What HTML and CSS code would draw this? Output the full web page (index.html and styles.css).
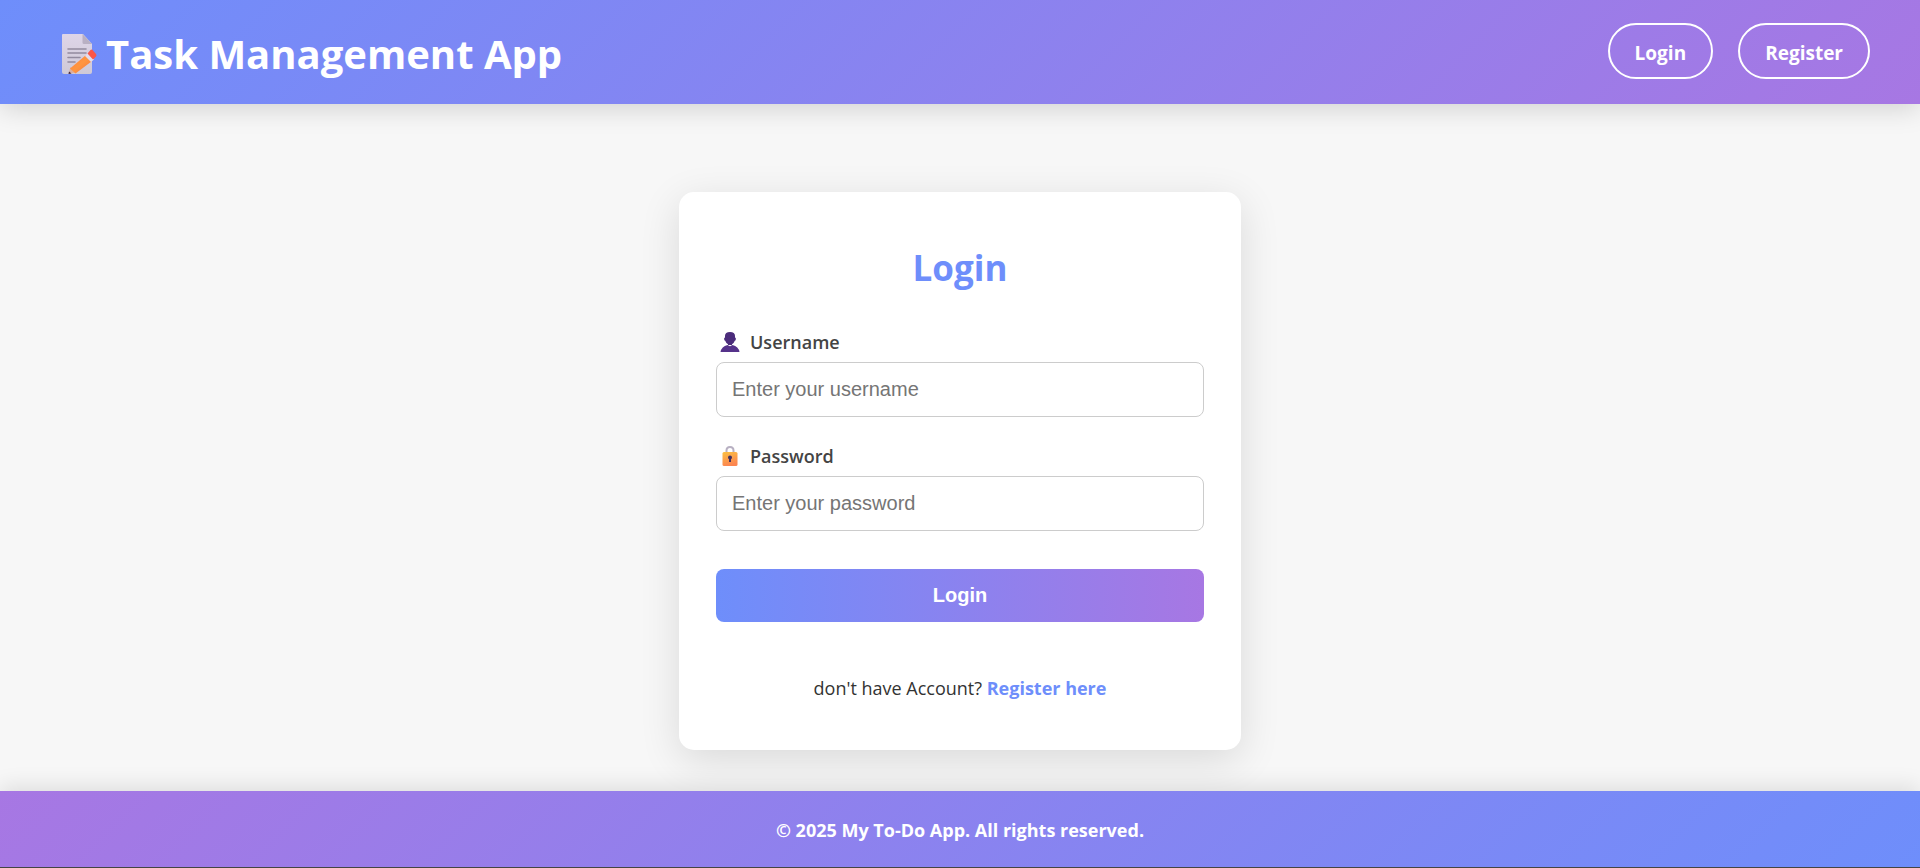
FILE: index.html
```html
<!DOCTYPE html>
<html lang="en">
<head>
<meta charset="utf-8">
<meta name="viewport" content="width=device-width, initial-scale=1">
<title>Task Management App</title>
<link rel="stylesheet" href="styles.css">
</head>
<body>
<header class="site-header">
  <h1 class="brand">
    <svg class="brand-icon" viewBox="0 0 44 44" aria-hidden="true">
      <defs>
        <linearGradient id="paper" x1="0" y1="0" x2="0" y2="1"><stop offset="0" stop-color="#ded5e8"/><stop offset="1" stop-color="#cfc9d6"/></linearGradient>
        <linearGradient id="pencil" x1="0" y1="0" x2="1" y2="1"><stop offset="0" stop-color="#ff7f3d"/><stop offset=".5" stop-color="#ff9640"/><stop offset="1" stop-color="#f4703c"/></linearGradient>
      </defs>
      <path d="M3 2H23L32 12V40Q32 42 30 42H4Q2 42 2 40V3Q2 2 3 2Z" fill="url(#paper)"/>
      <path d="M22.500 2L32 12H24Q22.500 12 22.500 10.500Z" fill="#b9b0c3"/>
      <path d="M8 17H26M8 21H26M8 25.500H20M8 30H15" stroke="#938b9f" stroke-width="1.600" stroke-linecap="round"/>
      <path d="M8.500 42L10.500 35L15.500 40.500Z" fill="#dcae9d"/>
      <path d="M10 36.500L25.500 23.500L31.500 29.500L15.500 41.500Z" fill="url(#pencil)"/>
      <path d="M25 24L28 21L34 27.500L31 30Z" fill="#e3dcec"/>
      <path d="M27.500 21.500L30.500 18Q31.500 17 32.500 18L36 22Q37 23 36 24.500L33 27.500Z" fill="#fb5548"/>
      <path d="M8.500 42L9 39.500L11.500 41.500Z" fill="#3c2440"/>
    </svg>
    <span>Task Management App</span>
  </h1>
  <nav class="nav">
    <a class="nav-link" href="#login">Login</a>
    <a class="nav-link" href="#register">Register</a>
  </nav>
</header>
<main class="content">
  <form class="card" id="login">
    <h2 class="card-title">Login</h2>
    <div class="field">
      <label class="label" for="username">
        <svg class="label-icon" viewBox="0 0 20 20" aria-hidden="true">
          <path d="M5 4Q5 0 10 0T15 4V5.500Q16.200 5.500 15.800 7.500Q15.500 8.800 14.800 8.800Q14 11.200 12 12.200V13H8V12.200Q6 11.200 5.200 8.800Q4.500 8.800 4.200 7.500Q3.800 5.500 5 5.500Z" fill="#4b2c7b"/>
          <path d="M.500 20Q1.500 14.500 7.500 13L10 14.200L12.500 13Q18.500 14.500 19.500 20Z" fill="#55328a"/>
        </svg>
        Username
      </label>
      <input class="input" id="username" type="text" placeholder="Enter your username">
    </div>
    <div class="field">
      <label class="label" for="password">
        <svg class="label-icon" viewBox="0 0 20 20" aria-hidden="true">
          <defs><linearGradient id="lock" x1="0" y1="0" x2=".3" y2="1"><stop offset="0" stop-color="#fbc043"/><stop offset="1" stop-color="#fc8650"/></linearGradient></defs>
          <path d="M6.500 8V4.500Q6.500 1 10 1T13.500 4.500V8" fill="none" stroke="#b8b0c2" stroke-width="2"/>
          <rect x="2.500" y="6" width="15" height="14" rx="1.500" fill="url(#lock)"/>
          <path d="M8 11.500A2 2 0 1 1 12 11.500Q12 12.700 11 13.200V16H9V13.200Q8 12.700 8 11.500Z" fill="#43305e"/>
        </svg>
        Password
      </label>
      <input class="input" id="password" type="password" placeholder="Enter your password">
    </div>
    <button class="submit" type="submit">Login</button>
    <p class="switch">don't have Account? <a class="switch-link" href="#register">Register here</a></p>
  </form>
</main>
<footer class="site-footer">
  <p class="copyright">© 2025 My To-Do App. All rights reserved.</p>
</footer>
</body>
</html>
```
FILE: styles.css
```css
* {
  box-sizing: border-box;
}

body {
  margin: 0;
  min-height: 100vh;
  display: flex;
  flex-direction: column;
  background: #f7f7f7;
  color: #333;
  font-family: "Segoe UI", "Open Sans", "Noto Sans", sans-serif;
  font-size: 18px;
  line-height: 24px;
}

.site-header {
  display: flex;
  align-items: center;
  justify-content: space-between;
  padding: 23px 50px 25px 60px;
  background: linear-gradient(135deg, #6e8efb, #a777e3);
  box-shadow: 0 5px 25px rgba(0, 0, 0, 0.15);
}

.brand {
  display: flex;
  align-items: center;
  gap: 2px;
  margin: 0;
  padding-top: 6px;
  color: #fff;
  font-size: 40px;
  line-height: 48px;
  font-weight: 700;
}

.brand-icon {
  width: 44px;
  height: 44px;
}

.nav {
  display: flex;
  gap: 25px;
}

.nav-link {
  padding: 16px 25px 12px;
  border: 2px solid #fff;
  border-radius: 30px;
  color: #fff;
  font-size: 19px;
  font-weight: 700;
  text-decoration: none;
}

.content {
  flex: 1;
  display: flex;
  justify-content: center;
  align-items: flex-start;
  padding: 88px 20px 41px;
}

.card {
  display: flex;
  flex-direction: column;
  width: 100%;
  max-width: 562px;
  padding: 52px 37px 50px;
  border-radius: 15px;
  background: #fff;
  box-shadow: 0 10px 40px rgba(0, 0, 0, 0.12);
}

.card-title {
  margin: 0 0 38px;
  color: #6e8efb;
  font-size: 35px;
  line-height: 48px;
  font-weight: 700;
  text-align: center;
}

.field {
  display: flex;
  flex-direction: column;
  gap: 8px;
  margin-bottom: 27px;
}

.label {
  display: flex;
  align-items: center;
  gap: 10px;
  padding-left: 4px;
  color: #444;
  font-weight: 600;
}

.label-icon {
  width: 20px;
  height: 20px;
}

.input {
  width: 100%;
  padding: 15px;
  border: 1px solid #ccc;
  border-radius: 8px;
  background: #fff;
  color: #333;
  font-family: Arial, "Liberation Sans", sans-serif;
  font-size: 20px;
  line-height: 23px;
}

.submit {
  margin-top: 11px;
  padding: 15px;
  border: 0;
  border-radius: 8px;
  background: linear-gradient(90deg, #6e8efb, #a777e3);
  color: #fff;
  font-family: Arial, "Liberation Sans", sans-serif;
  font-size: 20px;
  line-height: 23px;
  font-weight: 700;
}

.switch {
  margin: 54px 0 0;
  text-align: center;
}

.switch-link {
  color: #6e8efb;
  font-weight: 700;
  text-decoration: none;
}

.site-footer {
  padding: 27px 20px 25px;
  border-bottom: 1px solid #444;
  background: linear-gradient(135deg, #a777e3, #6e8efb);
  box-shadow: 0 -5px 20px rgba(0, 0, 0, 0.1);
  color: #fff;
  font-weight: 700;
  text-align: center;
}

.copyright {
  margin: 0;
}
```
